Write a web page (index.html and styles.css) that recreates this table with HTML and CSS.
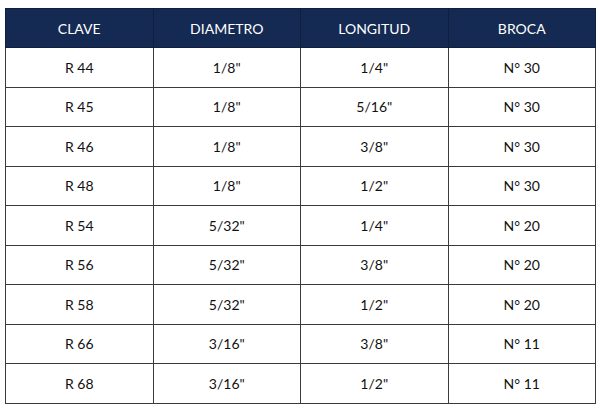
FILE: index.html
```html
<!DOCTYPE html>
<html lang="es">
<head>
<meta charset="utf-8">
<link rel="stylesheet" href="styles.css">
</head>
<body>
<table class="tabla">
  <thead>
    <tr><th>CLAVE</th><th>DIAMETRO</th><th>LONGITUD</th><th>BROCA</th></tr>
  </thead>
  <tbody>
    <tr><td>R 44</td><td>1/8"</td><td>1/4"</td><td>N° 30</td></tr>
    <tr><td>R 45</td><td>1/8"</td><td>5/16"</td><td>N° 30</td></tr>
    <tr><td>R 46</td><td>1/8"</td><td>3/8"</td><td>N° 30</td></tr>
    <tr><td>R 48</td><td>1/8"</td><td>1/2"</td><td>N° 30</td></tr>
    <tr><td>R 54</td><td>5/32"</td><td>1/4"</td><td>N° 20</td></tr>
    <tr><td>R 56</td><td>5/32"</td><td>3/8"</td><td>N° 20</td></tr>
    <tr><td>R 58</td><td>5/32"</td><td>1/2"</td><td>N° 20</td></tr>
    <tr><td>R 66</td><td>3/16"</td><td>3/8"</td><td>N° 11</td></tr>
    <tr><td>R 68</td><td>3/16"</td><td>1/2"</td><td>N° 11</td></tr>
  </tbody>
</table>
</body>
</html>
```

FILE: styles.css
```css
html, body {
  margin: 0;
  padding: 0;
  background: #ffffff;
}
body {
  padding: 8px 4px 0 5px;
  font-family: Lato, "Liberation Sans", sans-serif;
}
.tabla {
  border-collapse: collapse;
  width: 591px;
  table-layout: fixed;
}
.tabla th,
.tabla td {
  border: 1px solid #3a3a3a;
  text-align: center;
  font-size: 14px;
  font-weight: 400;
  padding: 0;
  width: 25%;
}
.tabla th {
  background: #142a52;
  color: #ffffff;
  height: 38px;
  border-color: #0f1f3d;
}
.tabla td {
  color: #111111;
  height: 38.5px;
}
```
